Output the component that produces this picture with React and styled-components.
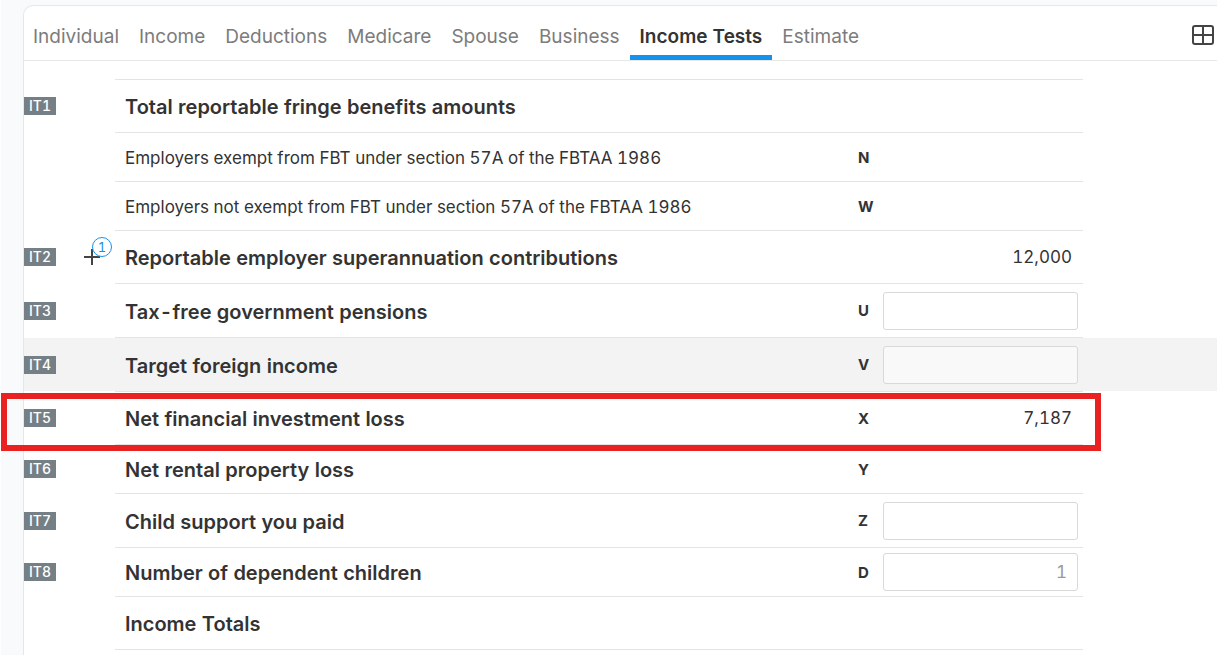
import { useState } from "react";
import styled, { createGlobalStyle } from "styled-components";

const tabs = [
  "Individual",
  "Income",
  "Deductions",
  "Medicare",
  "Spouse",
  "Business",
  "Income Tests",
  "Estimate",
];

const rows = [
  { tag: "IT1", label: "Total reportable fringe benefits amounts", heading: true, size: "large" },
  { label: "Employers exempt from FBT under section 57A of the FBTAA 1986", code: "N", size: "small" },
  { label: "Employers not exempt from FBT under section 57A of the FBTAA 1986", code: "W", size: "small" },
  { tag: "IT2", label: "Reportable employer superannuation contributions", heading: true, value: "12,000", notes: 1, size: "medium" },
  { tag: "IT3", label: "Tax-free government pensions", heading: true, code: "U", input: true, size: "large" },
  { tag: "IT4", label: "Target foreign income", heading: true, code: "V", input: true, active: true, size: "large" },
  { tag: "IT5", label: "Net financial investment loss", heading: true, code: "X", value: "7,187", marked: true, size: "medium" },
  { tag: "IT6", label: "Net rental property loss", heading: true, code: "Y", size: "small" },
  { tag: "IT7", label: "Child support you paid", heading: true, code: "Z", input: true, size: "large" },
  { tag: "IT8", label: "Number of dependent children", heading: true, code: "D", input: true, placeholder: "1", size: "small" },
  { label: "Income Totals", heading: true, size: "medium" },
];

const rowHeights = { small: "49px", medium: "53px", large: "54px" };

const App = () => {
  const [tab, setTab] = useState("Income Tests");
  const [values, setValues] = useState({});

  const handleChange = (tag, value) => {
    setValues({ ...values, [tag]: value });
  };

  return (
    <Page>
      <GlobalStyle />
      <Panel>
        <Header>
          <Tabs>
            {tabs.map((name) => (
              <Tab key={name} $active={name === tab} onClick={() => setTab(name)}>
                {name}
              </Tab>
            ))}
          </Tabs>
          <GridButton aria-label="Layout">
            <GridIcon viewBox="0 0 22 20">
              <rect x="1" y="1" width="20" height="18" rx="2" />
              <path d="M11 1v18M1 10h20" />
            </GridIcon>
          </GridButton>
        </Header>
        <Sheet>
          <colgroup>
            <TagCol />
            <col />
            <CodeCol />
            <ValueCol />
            <EndCol />
          </colgroup>
          <tbody>
            {rows.map((row) => (
              <Row key={row.label} $size={row.size} $active={row.active}>
                <SideCell>
                  <TagGroup>
                    {row.tag && <Tag>{row.tag}</Tag>}
                    {row.notes && (
                      <AddButton aria-label="Add item">
                        <PlusIcon viewBox="0 0 16 16">
                          <path d="M8 0v16M0 8h16" />
                        </PlusIcon>
                        <Count>{row.notes}</Count>
                      </AddButton>
                    )}
                  </TagGroup>
                  {row.marked && <Marker />}
                </SideCell>
                <LabelCell>
                  <Label
                    as={row.input ? "label" : "span"}
                    htmlFor={row.input ? row.tag : undefined}
                    $heading={row.heading}
                  >
                    {row.label}
                  </Label>
                </LabelCell>
                <CodeCell>{row.code}</CodeCell>
                <AmountCell $input={row.input}>
                  {row.input ? (
                    <Input
                      id={row.tag}
                      placeholder={row.placeholder}
                      value={values[row.tag] || ""}
                      $active={row.active}
                      onChange={(e) => handleChange(row.tag, e.target.value)}
                    />
                  ) : (
                    row.value
                  )}
                </AmountCell>
                <SideCell />
              </Row>
            ))}
          </tbody>
        </Sheet>
      </Panel>
    </Page>
  );
};

export default App;

const GlobalStyle = createGlobalStyle`
  * {
    box-sizing: border-box;
  }
  body {
    margin: 0;
    color: #333;
    font-family: Inter, "Liberation Sans", sans-serif;
    font-variant-numeric: tabular-nums;
  }
  button,
  input {
    font: inherit;
    font-variant-numeric: inherit;
  }
`;

const Page = styled.div`
  display: flex;
  min-height: 100vh;
  padding: 5px 0 0 22px;
  border-left: 1px solid #fff;
  background-color: #f9fafc;
`;

const Panel = styled.div`
  flex: 1;
  min-width: 0;
  border: 1px solid #e6e7ea;
  border-right: none;
  border-bottom: none;
  border-radius: 10px 0 0 0;
  background-color: #fff;
`;

const Header = styled.header`
  display: flex;
  justify-content: space-between;
  height: 55px;
  border-bottom: 1px solid #e8e8e8;
`;

const Tabs = styled.nav`
  display: flex;
  margin-left: -1px;
`;

const Tab = styled.button`
  padding: 11px 10px 0;
  border: none;
  border-bottom: 5px solid ${(props) => (props.$active ? "#1593ec" : "transparent")};
  background: none;
  color: ${(props) => (props.$active ? "#333" : "#7c7c7c")};
  font-size: 19px;
  font-weight: ${(props) => (props.$active ? 600 : 400)};
  white-space: nowrap;
  cursor: pointer;
`;

const GridButton = styled.button`
  display: flex;
  align-items: center;
  padding: 4px 3px 0 0;
  border: none;
  background: none;
  cursor: pointer;
`;

const GridIcon = styled.svg`
  width: 22px;
  height: 20px;
  fill: none;
  stroke: #444;
  stroke-width: 2;
`;

const Sheet = styled.table`
  width: 100%;
  margin-top: 18px;
  border-spacing: 0;
  table-layout: fixed;
`;

const TagCol = styled.col`
  width: 91px;
`;

const CodeCol = styled.col`
  width: 40px;
`;

const ValueCol = styled.col`
  width: 200px;
`;

const EndCol = styled.col`
  width: 134px;
`;

const Cell = styled.td`
  padding: 0;
  border-bottom: 1px solid #e4e4e4;
  background-clip: padding-box;
  vertical-align: middle;
`;

const Row = styled.tr`
  position: relative;
  height: ${(props) => rowHeights[props.$size]};

  td {
    background-color: ${(props) => (props.$active ? "#f3f3f3" : "transparent")};
  }
  &:first-child ${Cell} {
    border-top: 1px solid #e4e4e4;
  }
`;

const SideCell = styled(Cell)`
  &&&& {
    border-color: transparent;
  }
`;

const TagGroup = styled.div`
  display: flex;
  align-items: center;
  gap: 28px;
`;

const Tag = styled.span`
  width: 32px;
  background-color: #757f86;
  color: #fff;
  font-size: 14px;
  font-weight: 500;
  line-height: 18px;
  text-align: center;
`;

const AddButton = styled.button`
  position: relative;
  display: flex;
  padding: 0;
  border: none;
  background: none;
  cursor: pointer;
`;

const PlusIcon = styled.svg`
  width: 16px;
  height: 16px;
  fill: none;
  stroke: #444;
  stroke-width: 2;
`;

const Count = styled.span`
  position: absolute;
  top: -12px;
  left: 8px;
  width: 20px;
  height: 20px;
  border: 1px solid #1593ec;
  border-radius: 50%;
  color: #1593ec;
  font-size: 13px;
  line-height: 18px;
  text-align: center;
`;

const Marker = styled.div`
  position: absolute;
  top: 1px;
  right: 116px;
  bottom: -6px;
  left: -23px;
  border: 6px solid #ea2121;
  pointer-events: none;
`;

const LabelCell = styled(Cell)`
  padding: 2px 0 0 10px;
`;

const Label = styled.span`
  font-size: ${(props) => (props.$heading ? "20px" : "17px")};
  font-weight: ${(props) => (props.$heading ? 600 : 400)};
`;

const CodeCell = styled(Cell)`
  padding-left: 15px;
  font-size: 15px;
  font-weight: 700;
`;

const AmountCell = styled(Cell)`
  padding-right: ${(props) => (props.$input ? "5px" : "11px")};
  font-size: 17px;
  text-align: right;
`;

const Input = styled.input`
  display: block;
  width: 100%;
  height: 38px;
  padding: 0 10px;
  border: 1px solid #d9d9d9;
  border-radius: 3px;
  background-color: ${(props) => (props.$active ? "#f9f9f9" : "#fff")};
  color: #333;
  text-align: right;

  &::placeholder {
    color: #999;
  }
`;
